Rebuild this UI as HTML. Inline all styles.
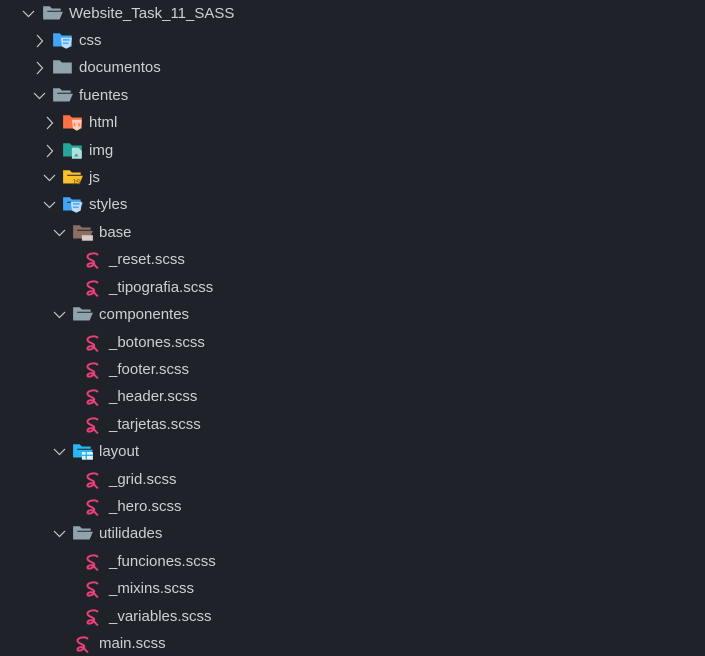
<!DOCTYPE html>
<html><head><meta charset="utf-8"><style>
body{margin:0;width:705px;height:652px;background:#1f2228;overflow:hidden;font-family:"Liberation Sans",sans-serif;font-size:15px;color:#cdd0d5}
.r{position:absolute;height:27px;left:0;right:0}
.t{position:absolute;top:5px;line-height:20px;white-space:nowrap}
svg{position:absolute}
</style></head><body>
<div id="c"></div>
<script>
const rows=[
[0,'fo','Website_Task_11_SASS',1],
[1,'css','css',0],[1,'fc','documentos',0],[1,'fo','fuentes',1],
[2,'html','html',0],[2,'img','img',0],[2,'js','js',1],[2,'sty','styles',1],
[3,'base','base',1],[4,'s','_reset.scss'],[4,'s','_tipografia.scss'],
[3,'fo','componentes',1],[4,'s','_botones.scss'],[4,'s','_footer.scss'],[4,'s','_header.scss'],[4,'s','_tarjetas.scss'],
[3,'lay','layout',1],[4,'s','_grid.scss'],[4,'s','_hero.scss'],
[3,'fo','utilidades',1],[4,'s','_funciones.scss'],[4,'s','_mixins.scss'],[4,'s','_variables.scss'],
[3,'s','main.scss']];
const icons={
fo:c=>`<path d="M1 3h6l2 2h8v2H5L1 15z" fill="${c||'#90a4ae'}"/><path d="M4 8h15l-3 7H1z" fill="${c||'#90a4ae'}"/>`,
fc:()=>`<path d="M1 3h6l2 2h9v10H1z" fill="#90a4ae"/>`,
css:()=>`<path d="M1 3h6l2 2h9v10H1z" fill="#42a5f5"/><path d="M8 7h10l-1 8-4 2-4-2z" fill="#bbdefb"/><path d="M10 9h6M10 12h5" stroke="#42a5f5" stroke-width="1.3"/>`,
sty:()=>`<path d="M1 3h6l2 2h8v2H5L1 15z" fill="#42a5f5"/><path d="M4 8h15l-3 7H1z" fill="#42a5f5"/><path d="M8 7h10l-1 8-4 2-4-2z" fill="#bbdefb"/><path d="M10 9h6M10 12h5" stroke="#42a5f5" stroke-width="1.3"/>`,
html:()=>`<path d="M1 3h6l2 2h9v10H1z" fill="#ff7043"/><path d="M9 7h9l-1 8-3.5 2L10 15z" fill="#ffccbc"/><path d="M12 10l-1 1.5 1 1.5M15 10l1 1.5-1 1.5" stroke="#ff7043" stroke-width="1" fill="none"/>`,
img:()=>`<path d="M1 3h6l2 2h9v10H1z" fill="#26a69a"/><path d="M9 7h6l3 3v7H9z" fill="#b2dfdb"/><path d="M11 15l2-3 2 3z" fill="#26a69a"/>`,
js:()=>`<path d="M1 3h6l2 2h8v2H5L1 15z" fill="#fbc02d"/><path d="M4 8h15l-3 7H1z" fill="#fbc02d"/><text x="9" y="16" font-size="7" fill="#5d4a00" font-family="Liberation Sans">JS</text>`,
base:()=>`<path d="M1 3h6l2 2h8v2H5L1 15z" fill="#8d6e63"/><path d="M4 8h15l-3 7H1z" fill="#8d6e63"/><rect x="9" y="12" width="10" height="5" fill="#d7ccc8"/>`,
lay:()=>`<path d="M1 3h6l2 2h8v2H5L1 15z" fill="#29b6f6"/><path d="M4 8h15l-3 7H1z" fill="#29b6f6"/><rect x="9" y="10" width="10" height="7" fill="#e1f5fe"/><path d="M9 13h10M13 10v7" stroke="#29b6f6" stroke-width="1.3"/>`,
s:()=>`<path d="M14 5c-2-2-9-1-9 2s7 3 6 6-6 4-6 2 4-3 6-1 2 3 3 3" stroke="#ec407a" stroke-width="1.8" fill="none" stroke-linecap="round"/>`
};
let h='';
rows.forEach((r,i)=>{
 const [L,ty,name,open]=r;const top=Math.round(12+27.42*i-13.5);
 const il=L==4?82:42+10*L;
 const tl=L==4?109:69+10*L;
 let s=`<div class="r" style="top:${top}px">`;
 if(ty!='s'){const cx=L==0?28:39+10*(L-1);
  s+= open?`<svg style="left:${cx-6}px;top:10px" width="13" height="10"><path d="M1 2l5.5 5.5L12 2" stroke="#c5c8cc" stroke-width="1.2" fill="none"/></svg>`
   :`<svg style="left:${cx-3}px;top:8px" width="8" height="14"><path d="M1 1l5.5 6L1 13" stroke="#c5c8cc" stroke-width="1.2" fill="none"/></svg>`;}
 s+=`<svg style="left:${il}px;top:4px" width="22" height="22" viewBox="0 0 20 20">${icons[ty]()}</svg><span class="t" style="left:${tl}px">${name}</span></div>`;
 h+=s;
});
document.getElementById('c').innerHTML=h;
</script>
</body></html>
